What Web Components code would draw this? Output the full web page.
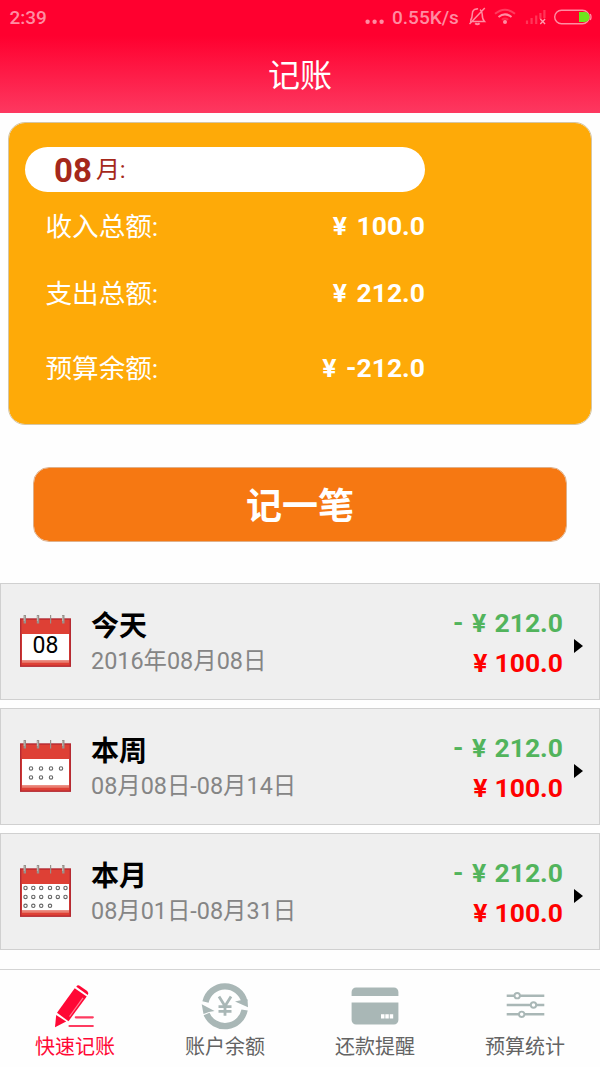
<!DOCTYPE html>
<html lang="zh-CN">
<head>
<meta charset="utf-8">
<title>记账</title>
<style>
    html, body { margin: 0; padding: 0; }
    body {
        width: 600px;
        height: 1067px;
        overflow: hidden;
        background: #fefefe;
        font-family: Roboto, "Noto Sans CJK SC", sans-serif;
    }
</style>
</head>
<body>
<ledger-app></ledger-app>

<script>
class StatusBar extends HTMLElement {
    constructor() {
        super();
        this.attachShadow({ mode: 'open' });
        this.shadowRoot.innerHTML = `
            <style>
                :host {
                    display: flex;
                    justify-content: space-between;
                    height: 34px;
                    padding: 0 8px 0 9.5px;
                    color: #ff8ca2;
                    font-weight: 500;
                    font-size: 19px;
                    line-height: 35px;
                }
                .right { display: flex; }
                .speed { width: 68px; margin-left: 8px; }
                svg { display: block; }
            </style>
            <span><slot></slot></span>
            <div class="right">
                <svg width="19" height="34" viewBox="365 0 19 34" fill="#ff8ca2">
                    <circle cx="367.6" cy="21.7" r="2.2"/><circle cx="374.6" cy="21.7" r="2.2"/><circle cx="381.6" cy="21.7" r="2.2"/>
                </svg>
                <span class="speed">0.55K/s</span>
                <svg width="132" height="34" viewBox="460 0 132 34" fill="none" stroke="#ff8ca2" stroke-width="1.5">
                    <path d="M470 21.5h14.5c-1.8-1.8-2.3-3.4-2.3-7.2 0-2.3-.7-3.8-2.2-4.7M470.5 20.7c1.4-2 1.8-3.4 1.8-6.6 0-3.4 2.2-5.1 5-5.1M484.8 8L469.5 24"/>
                    <path d="M475.2 23.3q2.2 2 4.4 0" stroke-width="2"/>
                    <path d="M476.5 8.8h1.6"/>
                    <g stroke-width="2">
                        <path d="M495 13.8q10-8.2 20 0" stroke="#ff3b5f"/>
                        <path d="M498.5 17q6.5-5.3 13 0"/>
                        <path d="M501.8 19.8q3.2-2.4 6.4 0" stroke="#ff2a50"/>
                    </g>
                    <circle cx="505" cy="22" r="2" fill="#ff8ca2" stroke="none"/>
                    <path d="M527 20.5v3.5M531.6 18v6M536.2 15.5v8.5M540.4 13v6M544.4 10v8" stroke="#ff3659" stroke-width="2.2"/>
                    <path d="M540.3 19l4.8 5M545.1 19l-4.8 5" stroke="#ff9daf" stroke-width="1.3"/>
                    <rect x="554.7" y="10.2" width="34.5" height="13.6" rx="6.8" stroke-width="1.4"/>
                    <path d="M590.2 14q1.6 3 0 6" stroke-width="1.4"/>
                    <path d="M579 12h5.5a5 5 0 0 1 0 10H579z" fill="#6ee61c" stroke="none"/>
                </svg>
            </div>
        `;
    }
}
customElements.define('status-bar', StatusBar);

class AppHeader extends HTMLElement {
    constructor() {
        super();
        this.attachShadow({ mode: 'open' });
        this.shadowRoot.innerHTML = `
            <style>
                :host {
                    display: block;
                    height: 113px;
                    background: linear-gradient(#ff002f 0, #ff002f 36px, #fd3860 113px);
                }
                h1 {
                    margin: 0;
                    padding-top: 3px;
                    text-align: center;
                    color: #fff;
                    font-weight: 400;
                    font-size: 32px;
                    line-height: 79px;
                }
            </style>
            <status-bar>2:39</status-bar>
            <h1><slot></slot></h1>
        `;
    }
}
customElements.define('app-header', AppHeader);

class SummaryLine extends HTMLElement {
    constructor() {
        super();
        this.attachShadow({ mode: 'open' });
        this.shadowRoot.innerHTML = `
            <style>
                :host {
                    display: flex;
                    justify-content: space-between;
                    width: 380px;
                    height: 40px;
                    color: #fff;
                    font-size: 26.6px;
                    line-height: 40px;
                }
                span { padding: 1px 0 0 .5px; }
                b {
                    font-weight: 700;
                    font-size: 26.5px;
                    line-height: 39px;
                    word-spacing: 3px;
                }
            </style>
            <span>${this.getAttribute('label')}</span>
            <b><slot></slot></b>
        `;
    }
}
customElements.define('summary-line', SummaryLine);

class MonthSummary extends HTMLElement {
    constructor() {
        super();
        this.attachShadow({ mode: 'open' });
        this.shadowRoot.innerHTML = `
            <style>
                :host {
                    display: block;
                    box-sizing: border-box;
                    height: 303px;
                    margin: 9px 8px 0;
                    padding: 24px 16px 0;
                    border: 1px solid #d6c6a4;
                    border-radius: 17px;
                    background: #feaa08;
                    background-clip: padding-box;
                }
                .month {
                    display: flex;
                    box-sizing: border-box;
                    width: 400px;
                    height: 45px;
                    padding-left: 29px;
                    border-radius: 22.5px;
                    background: #fff;
                    color: #a5281b;
                    font-size: 24px;
                    line-height: 46px;
                }
                b { font-size: 33px; margin-right: 4px; line-height: 47px; }
                .lines {
                    display: grid;
                    grid-template-rows: 66.5px 75px 40px;
                    padding: 14px 0 0 20px;
                }
            </style>
            <div class="month"><b>08</b><span>月:</span></div>
            <div class="lines">
                <summary-line label="收入总额:">¥ 100.0</summary-line>
                <summary-line label="支出总额:">¥ 212.0</summary-line>
                <summary-line label="预算余额:">¥ -212.0</summary-line>
            </div>
        `;
    }
}
customElements.define('month-summary', MonthSummary);

class AddButton extends HTMLElement {
    constructor() {
        super();
        this.attachShadow({ mode: 'open' });
        this.shadowRoot.innerHTML = `
            <style>
                :host { display: block; margin: 42px 33px 0; }
                button {
                    display: block;
                    box-sizing: border-box;
                    width: 100%;
                    height: 75px;
                    padding: 5px 0 0;
                    border: 1px solid #dfb08a;
                    border-radius: 16px;
                    background: #f67812;
                    background-clip: padding-box;
                    color: #fff;
                    font: 700 36px/68px Roboto, "Noto Sans CJK SC", sans-serif;
                }
            </style>
            <button><slot></slot></button>
        `;
    }
}
customElements.define('add-button', AddButton);

// x of the day rings, row by row, for each kind of calendar
const RING_ROWS = {
    day: [],
    week: [[11, 21, 31, 41], [11, 21, 31]],
    month: [[5.5, 13.3, 21.2, 30, 37.8, 45.5], [5.5, 13.3, 21.2, 30, 37.8, 45.5], [5.5, 13.3, 21.2, 30]]
};

class CalendarIcon extends HTMLElement {
    constructor() {
        super();
        this.attachShadow({ mode: 'open' });
        const kind = this.getAttribute('kind');
        const top = kind === 'month' ? 23 : 28.5;
        const rings = RING_ROWS[kind].map((row, i) =>
            row.map(x => `<circle cx="${x}" cy="${top + i * 8.9}" r="1.7"/>`).join('')
        ).join('');
        const hooks = [4.8, 18, 30.6, 43.3].map((x, i) =>
            `<path d="M${x} 0v8.500" stroke="#98918c" stroke-width="${i === 2 ? 1.2 : 2.4}"/>` +
            (i === 2 ? '' : `<path d="M${x - .6} 1v5" stroke="#c9c5bd" stroke-width=".8"/>`)
        ).join('');

        this.shadowRoot.innerHTML = `
            <style>
                :host { display: grid; width: 51px; height: 52px; }
                svg, span { grid-area: 1 / 1; }
                span {
                    text-align: center;
                    color: #000;
                    font-size: 23px;
                    line-height: 61px;
                    height: 52px;
                }
            </style>
            <svg width="51" height="52" viewBox="0 0 51 52">
                <rect x=".7" y="4" width="49.6" height="47.2" fill="#de4035" stroke="#b52a32" stroke-width="1.4"/>
                <rect x="2" y="19" width="47" height="26.5" fill="#fff"/>
                <path d="M2 46.7h47" stroke="#e98073" stroke-width="2.2"/>
                ${hooks}
                <g fill="#fff" stroke="#666" stroke-width="1.1">${rings}</g>
            </svg>
            <span><slot></slot></span>
        `;
    }
}
customElements.define('calendar-icon', CalendarIcon);

class PeriodRow extends HTMLElement {
    constructor() {
        super();
        this.attachShadow({ mode: 'open' });
        this.shadowRoot.innerHTML = `
            <style>
                :host {
                    display: flex;
                    box-sizing: border-box;
                    height: 117px;
                    padding: 0 16px 0 19px;
                    border: 1px solid #d0d0d0;
                    background: #efefef;
                }
                calendar-icon { margin-top: 31px; }
                .text { flex: 1; margin-left: 20px; padding-top: 24px; }
                .title {
                    color: #000;
                    font-weight: 700;
                    font-size: 28px;
                    line-height: 38px;
                }
                .range {
                    color: #858585;
                    font-size: 23.4px;
                    line-height: 30px;
                }
                .money {
                    padding-top: 19px;
                    text-align: right;
                    font-weight: 700;
                    font-size: 26.5px;
                    line-height: 40px;
                }
                .out { color: #52b45c; word-spacing: 1.8px; }
                .in { color: #ff0000; word-spacing: .5px; }
                .arrow { display: block; margin: 55px 0 0 11px; }
            </style>
            <calendar-icon kind="${this.getAttribute('kind')}"><slot name="day"></slot></calendar-icon>
            <div class="text">
                <div class="title">${this.getAttribute('title-text')}</div>
                <div class="range"><slot></slot></div>
            </div>
            <div class="money">
                <div class="out">- ¥ 212.0</div>
                <div class="in">¥ 100.0</div>
            </div>
            <svg class="arrow" width="9" height="14"><path d="M0 0l9 7-9 7z"/></svg>
        `;
    }
}
customElements.define('period-row', PeriodRow);

const TAB_ICONS = {
    write: `
        <g fill="#ff0835">
            <path d="M26.3 6.800q1.300-2.400 3.700-.9l7.200 5q2 1.800.6 4.100z"/>
            <path d="M24.700 8.200l12 8.400-18.200 24.600-11.500-8.400z"/>
            <path d="M6.200 35l10 6.600L5 47.200z"/>
        </g>
        <path d="M33 17.800L19.500 36.500" stroke="#fe8096" stroke-width="1.200"/>
        <path d="M25.800 37.300h17M19.500 46h23.300" stroke="#fe3b60" stroke-width="2.200" stroke-linecap="round"/>`,
    balance: `
        <g fill="none" stroke="#a9b7b6" stroke-width="6.400">
            <path d="M5.500 22A20 20 0 0 1 44.400 21.500"/>
            <path d="M44.600 30A20 20 0 0 1 6.600 34"/>
        </g>
        <path d="M48 27.200L35 21.500l5.500-1.200 7-1zM1.700 24.200L14.600 30.900l-5.600 1-5.500 2z" fill="#a9b7b6"/>
        <path d="M19 16.500l6 9.700 6-9.700M25 26v9.700M18.500 26.700h13M18.500 31.300h13" fill="none" stroke="#a9b7b6" stroke-width="2.800"/>`,
    card: `
        <path d="M1.600 16v-4a4.500 4.500 0 0 1 4.500-4.500h37.800a4.500 4.500 0 0 1 4.500 4.500v4zM1.600 22.600h46.800V40a4.500 4.500 0 0 1-4.500 4.500H6.100A4.500 4.500 0 0 1 1.600 40z" fill="#a9b7b6"/>
        <path d="M31 34.200h3.500v4.200H31zM35.300 34.200h3.500v4.200h-3.500zM39.700 34.200h3.500v4.200h-3.500z" fill="#fff"/>`,
    stats: `
        <path d="M6.700 15.700h37.600M6.700 25h37.600M6.700 34.300h37.600" stroke="#a9b7b6" stroke-width="2.600"/>
        <g fill="#fefefe" stroke="#a9b7b6" stroke-width="1.900">
            <circle cx="17.200" cy="15.700" r="2.700"/><circle cx="33.500" cy="25" r="2.700"/><circle cx="21.700" cy="34.300" r="2.700"/>
        </g>`
};

class TabItem extends HTMLElement {
    constructor() {
        super();
        this.attachShadow({ mode: 'open' });
        this.shadowRoot.innerHTML = `
            <style>
                :host {
                    display: flex;
                    flex-direction: column;
                    align-items: center;
                    padding-top: 10px;
                    color: #636363;
                    font-size: 20px;
                    line-height: 28px;
                }
                :host([active]) { color: #ff0835; }
                svg { display: block; }
                span { margin-top: 3px; }
            </style>
            <svg width="50" height="50" viewBox="0 0 50 50">${TAB_ICONS[this.getAttribute('icon')]}</svg>
            <span><slot></slot></span>
        `;
    }
}
customElements.define('tab-item', TabItem);

class LedgerApp extends HTMLElement {
    constructor() {
        super();
        this.attachShadow({ mode: 'open' });
        this.shadowRoot.innerHTML = `
            <style>
                :host {
                    display: flex;
                    flex-direction: column;
                    height: 1067px;
                }
                .periods {
                    display: grid;
                    gap: 8px;
                    margin-top: 41px;
                }
                nav {
                    display: grid;
                    grid-template-columns: repeat(4, 1fr);
                    box-sizing: border-box;
                    height: 98px;
                    margin-top: auto;
                    border-top: 1px solid #d4d4d4;
                }
            </style>
            <app-header>记账</app-header>
            <month-summary></month-summary>
            <add-button>记一笔</add-button>
            <div class="periods">
                <period-row kind="day" title-text="今天"><span slot="day">08</span>2016年08月08日</period-row>
                <period-row kind="week" title-text="本周">08月08日-08月14日</period-row>
                <period-row kind="month" title-text="本月">08月01日-08月31日</period-row>
            </div>
            <nav>
                <tab-item icon="write" active>快速记账</tab-item>
                <tab-item icon="balance">账户余额</tab-item>
                <tab-item icon="card">还款提醒</tab-item>
                <tab-item icon="stats">预算统计</tab-item>
            </nav>
        `;
    }
}
customElements.define('ledger-app', LedgerApp);
</script>
</body>
</html>
